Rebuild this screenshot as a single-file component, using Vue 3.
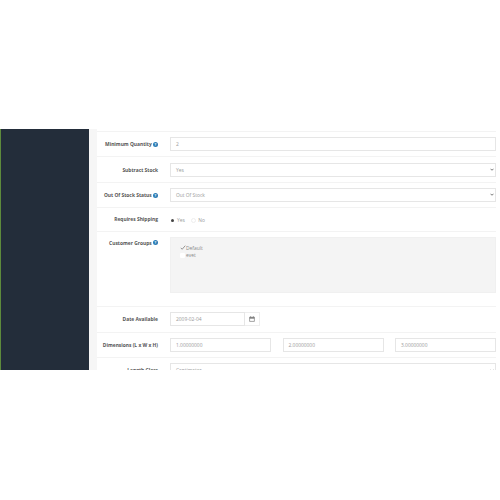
<template>
    <div class="page">
        <aside class="sidebar"></aside>
        <main class="content">
            <div class="form-row" v-for="row in rows" :key="row.label" :class="row.cls">
                <label class="form-row__label">
                    {{ row.label }}
                    <span v-if="row.help" class="help">?</span>
                </label>
                <div class="form-row__field">
                    <div v-if="row.type === 'input'" class="control">{{ row.value }}</div>
                    <div v-else-if="row.type === 'select'" class="control control--select">
                        {{ row.value }}
                        <svg class="chevron" viewBox="0 0 8 5" width="4" height="3">
                            <path d="M1 1l3 3 3-3" fill="none" stroke="#555" stroke-width="1.6" />
                        </svg>
                    </div>
                    <div v-else-if="row.type === 'radio'" class="radios">
                        <span class="radio radio--on"></span><span class="radio__text">Yes</span>
                        <span class="radio radio--off"></span><span class="radio__text">No</span>
                    </div>
                    <div v-else-if="row.type === 'well'" class="well">
                        <div class="well__item">
                            <svg class="tick" viewBox="0 0 7 6" width="6" height="5">
                                <path d="M.8 3.4l1.7 1.7L6.2.8" fill="none" stroke="#666" stroke-width=".8" />
                            </svg>
                            <span>Default</span>
                        </div>
                        <div class="well__item">
                            <span class="box"></span>
                            <span>evet</span>
                        </div>
                    </div>
                    <div v-else-if="row.type === 'date'" class="date-group">
                        <div class="control date-group__input">{{ row.value }}</div>
                        <div class="date-group__btn">
                            <svg viewBox="0 0 10 10" width="6" height="6">
                                <path d="M1 2h8v7H1z M2.5 .5v2 M7.5 .5v2" fill="none" stroke="#777" stroke-width="1.1" />
                                <path d="M1 2h8v2.4H1z" fill="#777" />
                            </svg>
                        </div>
                    </div>
                    <div v-else-if="row.type === 'dims'" class="dims">
                        <div class="control" v-for="d in row.values" :key="d">{{ d }}</div>
                    </div>
                </div>
            </div>
        </main>
    </div>
</template>

<script setup>
const rows = [
    { label: 'Minimum Quantity', help: true, type: 'input', value: '2' },
    { label: 'Subtract Stock', type: 'select', value: 'Yes' },
    { label: 'Out Of Stock Status', help: true, type: 'select', value: 'Out Of Stock' },
    { label: 'Requires Shipping', type: 'radio', cls: 'form-row--radio' },
    { label: 'Customer Groups', help: true, type: 'well', cls: 'form-row--top' },
    { label: 'Date Available', type: 'date', value: '2009-02-04' },
    { label: 'Dimensions (L x W x H)', type: 'dims', values: ['1.00000000', '2.00000000', '3.00000000'] },
    { label: 'Length Class', type: 'select', value: 'Centimeter' }
];
</script>

<style>
html,
body {
    background: #fff;
}
</style>

<style scoped>
.page {
    display: flex;
    height: 241px;
    margin-top: 129px;
    overflow: hidden;
    font-family: "Open Sans", sans-serif;
    font-size: 4.9px;
    color: #666;
}

.sidebar {
    width: 88px;
    flex: none;
    background: #232d3a;
    border-left: 1px solid #5d8a3c;
}

.content {
    flex: 1;
    padding: 2px 4px 0 8px;
    background: linear-gradient(to right, #f6f6f6 8px, #fff 8px);
}

.form-row {
    display: flex;
    align-items: center;
    height: 25.4px;
    box-sizing: border-box;
    border-top: 1px solid #f3f3f3;
    flex: none;
}

.form-row--radio {
    height: 23.5px;
}

.form-row--top {
    height: 75.5px;
    align-items: flex-start;
    padding-top: 5px;
}

.form-row__label {
    width: 62px;
    flex: none;
    text-align: right;
    font-weight: 700;
    color: #555;
    white-space: nowrap;
    margin-right: 12px;
    margin-left: -1px;
}

.form-row--top .form-row__label {
    margin-top: 3px;
}

.form-row__field {
    flex: 1;
    min-width: 0;
}

.help {
    display: inline-block;
    width: 5px;
    height: 5px;
    border-radius: 50%;
    background: #2a7bb5;
    color: #fff;
    font-size: 3.8px;
    line-height: 5px;
    text-align: center;
    vertical-align: 0.4px;
}

.control {
    position: relative;
    height: 14px;
    box-sizing: border-box;
    border: 1px solid #e6e6e6;
    background: #fff;
    padding: 0 5px;
    line-height: 12px;
    color: #999;
}

.chevron {
    position: absolute;
    right: 1px;
    top: 4.5px;
}

.radios {
    display: flex;
    align-items: center;
    height: 8px;
    margin-top: 2px;
    color: #999;
}

.radio {
    border-radius: 50%;
    box-sizing: border-box;
}

.radio--on {
    width: 3px;
    height: 3px;
    margin: 0 3.5px 0 0.5px;
    background: #444;
}

.radio--off {
    width: 5.5px;
    height: 5.5px;
    margin: 0 2px 0 6px;
    border: 1px solid #eee;
}

.well {
    height: 56.5px;
    box-sizing: border-box;
    padding: 6.5px 9px;
    background: #f4f4f4;
    border: 1px solid #f0f0f0;
    color: #888;
}

.well__item {
    display: flex;
    align-items: center;
    height: 7.5px;
}

.box {
    width: 5px;
    height: 5px;
    margin-right: 1px;
    background: #fff;
    border-radius: 1px;
}

.date-group {
    display: flex;
    width: 90px;
}

.date-group__input {
    width: 75px;
    flex: none;
}

.date-group__btn {
    display: flex;
    align-items: center;
    justify-content: center;
    flex: 1;
    height: 14px;
    box-sizing: border-box;
    border: 1px solid #eee;
    border-left: 0;
}

.dims {
    display: grid;
    grid-template-columns: repeat(3, 1fr);
    gap: 11.5px;
}
</style>
